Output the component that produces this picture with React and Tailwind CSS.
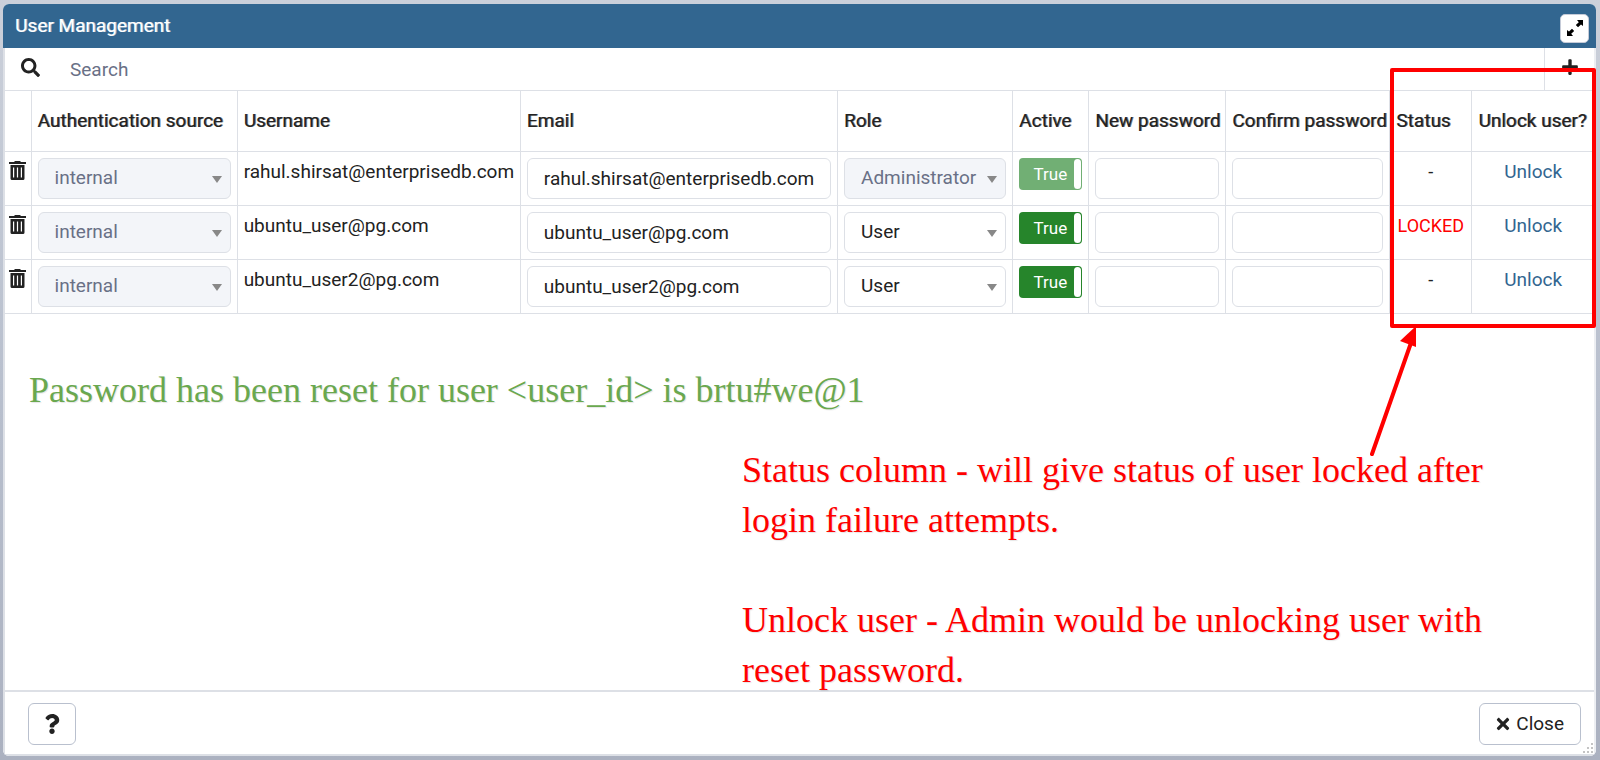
import { useState } from "react";
import {
  FaPlus,
  FaQuestion,
  FaSearch,
  FaTimes,
} from "react-icons/fa";

const COLUMNS = [
  { label: "", width: "w-[26px]" },
  { label: "Authentication source", width: "w-[206px]" },
  { label: "Username", width: "w-[283px]" },
  { label: "Email", width: "w-[317px]" },
  { label: "Role", width: "w-[175px]" },
  { label: "Active", width: "w-[76px]" },
  { label: "New password", width: "w-[137px]" },
  { label: "Confirm password", width: "w-[164px]" },
  { label: "Status", width: "w-[82px]" },
  { label: "Unlock user?", width: "w-[122px]" },
];

const USERS = [
  {
    username: "rahul.shirsat@enterprisedb.com",
    role: "Administrator",
    self: true,
    locked: false,
  },
  { username: "ubuntu_user@pg.com", role: "User", self: false, locked: true },
  { username: "ubuntu_user2@pg.com", role: "User", self: false, locked: false },
];

export default function App() {
  return (
    <div className="flex min-h-screen flex-col bg-[#b9c0ce] bg-linear-to-b from-[#cbd0da] via-[#b9c0ce] to-[#abb1c0] px-[3px] pt-1 pb-1 pr-1 font-['Roboto',sans-serif] text-[19px] leading-7 text-[#222222]">
      <div className="flex flex-1 flex-col overflow-hidden rounded-md bg-white">
        <header className="flex h-11 items-center justify-between bg-[#326690] pl-3 pr-[7px] text-white">
          <h1 className="font-normal text-shadow-[1px_0_0_rgb(255_255_255/0.6)]">
            User Management
          </h1>
          <button
            aria-label="Maximize"
            className="mt-2 mb-1 grid size-[29px] place-items-center rounded-[5px] border border-[#c5cbd8] bg-white text-black"
          >
            <ExpandIcon />
          </button>
        </header>

        <div className="flex flex-1 flex-col border-x-2 border-b-2 border-[#dde0e6] border-r-[#eceef2]">
          <main className="relative z-10 flex-1">
            <SearchBar />
            <UserTable />
            <Notes />
            <Highlight />
          </main>

          <footer className="relative flex items-center justify-between border-t-2 border-[#dde0e6] pt-[11px] pr-[13px] pb-[9px] pl-[23px]">
            <button
              aria-label="Help"
              className="grid h-[42px] w-12 place-items-center rounded-md border border-[#b9c0ce]"
            >
              <FaQuestion className="size-5" />
            </button>
            <button className="flex h-[42px] items-center gap-1 rounded-md border border-[#b9c0ce] pr-4 pl-[14px]">
              <FaTimes className="size-[18px]" />
              Close
            </button>
            <ResizeGrip />
          </footer>
        </div>
      </div>
    </div>
  );
}

function SearchBar() {
  return (
    <div className="flex h-[43px] border-b border-[#dde0e6]">
      <label htmlFor="search" className="grid w-[50px] place-items-center pb-1">
        <FaSearch className="size-[19px]" />
      </label>
      <input
        id="search"
        type="text"
        placeholder="Search"
        className="min-w-0 flex-1 px-[15px] pt-px outline-none placeholder:text-[#697086]"
      />
      <button
        aria-label="Add user"
        className="grid w-[50px] place-items-center border-l border-[#dde0e6] pb-1"
      >
        <FaPlus className="size-[18px]" />
      </button>
    </div>
  );
}

function UserTable() {
  return (
    <table className="w-full table-fixed border-collapse">
      <thead>
        <tr className="h-[60px] border-b border-[#dde0e6]">
          {COLUMNS.map((col) => (
            <th
              key={col.label}
              className={`${col.width} border-r border-[#dde0e6] pl-[6px] text-left font-normal whitespace-nowrap text-shadow-[1px_0_0_rgb(34_34_34/0.6)] last:border-r-0`}
            >
              {col.label}
            </th>
          ))}
        </tr>
      </thead>
      <tbody>
        {USERS.map((user) => (
          <UserRow key={user.username} user={user} />
        ))}
      </tbody>
    </table>
  );
}

function UserRow({ user }) {
  const [email, setEmail] = useState(user.username);
  const [active, setActive] = useState(true);

  return (
    <tr className="border-b border-[#dde0e6]">
      <Cell flush>
        <button
          aria-label={`Delete ${user.username}`}
          className="grid w-full place-items-center pt-[3px]"
        >
          <TrashIcon />
        </button>
      </Cell>
      <Cell>
        <Select
          label="Authentication source"
          options={["internal"]}
          value="internal"
          disabled
        />
      </Cell>
      <Cell>{user.username}</Cell>
      <Cell>
        <input
          type="email"
          aria-label="Email"
          value={email}
          onChange={(e) => setEmail(e.target.value)}
          className="block h-[41px] w-full rounded-md border border-[#dde0e6] px-4"
        />
      </Cell>
      <Cell>
        <Select
          label="Role"
          options={["Administrator", "User"]}
          value={user.role}
          disabled={user.self}
        />
      </Cell>
      <Cell>
        <Toggle
          checked={active}
          disabled={user.self}
          onChange={() => setActive(!active)}
        />
      </Cell>
      <Cell>
        <PasswordInput label="New password" />
      </Cell>
      <Cell>
        <PasswordInput label="Confirm password" />
      </Cell>
      <Cell flush>
        <div
          className={`text-center text-[18px] ${user.locked ? "text-[#ff0000]" : ""}`}
        >
          {user.locked ? "LOCKED" : "-"}
        </div>
      </Cell>
      <Cell>
        <div className="text-center">
          <a href="#unlock" className="text-[#326690]">
            Unlock
          </a>
        </div>
      </Cell>
    </tr>
  );
}

function Cell({ flush, children }) {
  return (
    <td
      className={`border-r border-[#dde0e6] py-[6px] align-top last:border-r-0 ${flush ? "px-0" : "px-[6px]"}`}
    >
      {children}
    </td>
  );
}

function Select({ label, options, value, disabled }) {
  return (
    <div className="relative">
      <select
        aria-label={label}
        defaultValue={value}
        disabled={disabled}
        className="block h-[41px] w-full appearance-none rounded-md border border-[#dde0e6] bg-white px-4 disabled:bg-[#f3f5f9] disabled:text-[#697086] disabled:opacity-100"
      >
        {options.map((option) => (
          <option key={option}>{option}</option>
        ))}
      </select>
      <svg
        viewBox="0 0 10 7"
        className="pointer-events-none absolute top-[18px] right-[9px] h-[7px] w-[10px] fill-[#888888]"
      >
        <path d="M0 0h10L5 7z" />
      </svg>
    </div>
  );
}

function PasswordInput({ label }) {
  return (
    <input
      type="password"
      aria-label={label}
      className="block h-[41px] w-full rounded-md border border-[#dde0e6] px-4"
    />
  );
}

function Toggle({ checked, disabled, onChange }) {
  return (
    <label
      className={`flex h-8 items-center justify-end gap-[7px] rounded bg-[#26852b] p-px text-[17px] text-white ${disabled ? "opacity-65" : ""}`}
    >
      <input
        type="checkbox"
        checked={checked}
        disabled={disabled}
        onChange={onChange}
        className="sr-only"
      />
      {checked ? "True" : "False"}
      <span className="h-[30px] w-[7px] rounded bg-white" />
    </label>
  );
}

function Notes() {
  return (
    <div className="font-['Liberation_Serif',serif] text-[36px] leading-[50px]">
      <p className="mt-[51px] pl-6 text-[#6aa84f] text-shadow-[1px_1px_1px_rgb(0_0_0/0.1)]">
        Password has been reset for user &lt;user_id&gt; is brtu#we@1
      </p>
      <div className="mt-[30px] -mb-6 ml-auto w-[852px] pr-[90px] text-[#ff0000] text-shadow-[1px_1px_1px_rgb(0_0_0/0.1)]">
        <p>
          Status column - will give status of user locked after login failure
          attempts.
        </p>
        <p className="mt-[50px]">
          Unlock user - Admin would be unlocking user with reset password.
        </p>
      </div>
    </div>
  );
}

// red frame round the last two columns, with its arrow
function Highlight() {
  return (
    <div className="pointer-events-none absolute top-5 -right-[2px] h-[260px] w-[206px] rounded-xs border-4 border-[#ff0000]">
      <svg
        viewBox="0 0 60 130"
        className="absolute top-[254px] -left-6 h-[130px] w-[60px]"
      >
        <path d="M2 128 42 14" stroke="#ff0000" strokeWidth="4" strokeLinecap="round" />
        <path d="M46 0v21l-16-6z" fill="#ff0000" />
      </svg>
    </div>
  );
}

function ExpandIcon() {
  return (
    <svg viewBox="0 0 18 18" className="size-[18px] fill-current">
      <path d="M11 1h6v6l-2-1.500-3 2.700-2.200-2.200 3-2.700z" />
      <path d="M7 17H1v-6l2 1.500 3-2.700 2.200 2.200-3 2.700z" />
    </svg>
  );
}

function TrashIcon() {
  return (
    <svg viewBox="0 0 17 19" className="h-[19px] w-[17px] fill-current">
      <path d="M0 1h5l1-1h5l1 1h5v2H0z" />
      <path
        fillRule="evenodd"
        d="M1.500 4h14v13.500a1.500 1.500 0 0 1-1.500 1.500H3a1.500 1.500 0 0 1-1.500-1.500zM4 6.500v10h1.200v-10zM7.900 6.500v10h1.200v-10zM11.800 6.500v10H13v-10z"
      />
    </svg>
  );
}

function ResizeGrip() {
  return (
    <svg
      viewBox="0 0 12 12"
      className="absolute right-0 bottom-0 size-3 fill-[#c4c4c4]"
    >
      <path d="M9 1h2v2H9zM9 5h2v2H9zM5 5h2v2H5zM9 9h2v2H9zM5 9h2v2H5zM1 9h2v2H1z" />
    </svg>
  );
}
